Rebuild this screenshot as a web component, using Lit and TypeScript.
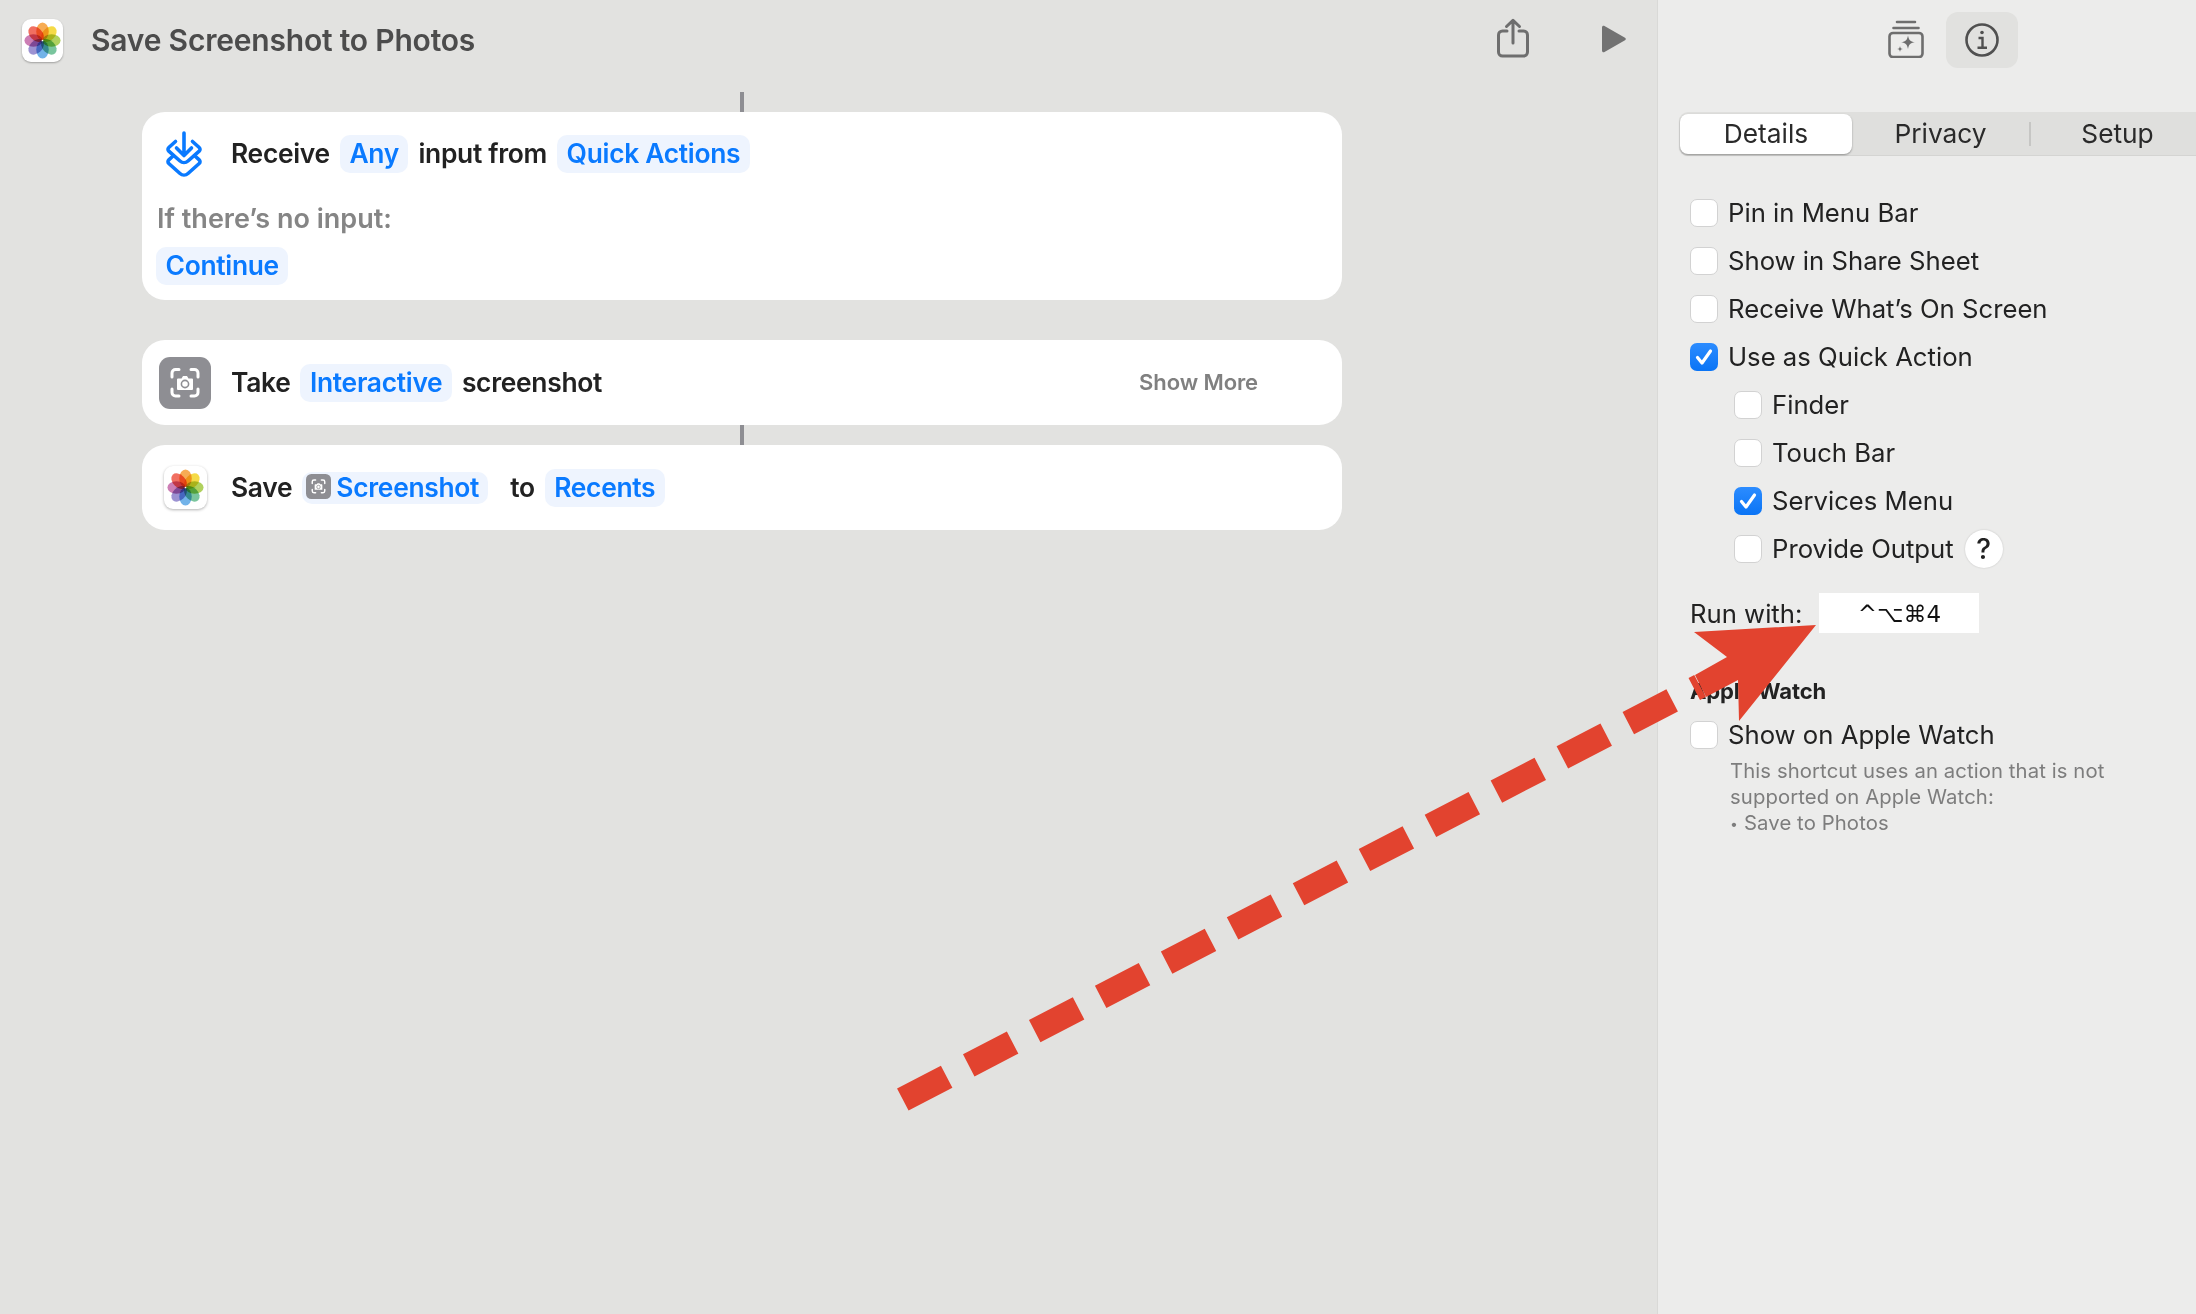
import { LitElement, html, css, svg } from "lit";
import { customElement } from "lit/decorators.js";

const petals = [
  ["#f6a13c", 0], ["#f4d52e", 45], ["#a5cb48", 90], ["#66bd90", 135],
  ["#5ea9e6", 180], ["#8e83cc", 225], ["#c56cab", 270], ["#ef5b4b", 315],
] as const;

const photos = () => html`<svg class="photos" viewBox="7 7 86 86">
  ${petals.map(([c, a]) => svg`<ellipse cx="50" cy="29" rx="14.500" ry="21" fill=${c} fill-opacity="0.88" style="mix-blend-mode:multiply" transform="rotate(${a} 50 50)"/>`)}
  <circle cx="50" cy="50" r="2" fill="#fff"/>
</svg>`;

const shot = () => html`<svg viewBox="0 0 52 52" class="shot">
  <rect width="52" height="52" rx="11" fill="#8e8e93"/>
  <g fill="none" stroke="#fff" stroke-width="3" stroke-linecap="round" stroke-linejoin="round">
    <path d="M13 20v-4a3.500 3.500 0 0 1 3.500-3.500H20M32 12.500h3.500A3.500 3.500 0 0 1 39 16v4M39 32v3.500a3.500 3.500 0 0 1-3.500 3.500H32M20 39h-3.500A3.500 3.500 0 0 1 13 35.500V32"/>
  </g>
  <path d="M19 21.500h3.500l1.500-2.500h4l1.500 2.500H33a1 1 0 0 1 1 1V32a1 1 0 0 1-1 1H19a1 1 0 0 1-1-1v-9.500a1 1 0 0 1 1-1z" fill="#fff"/>
  <circle cx="26" cy="27" r="3.600" fill="none" stroke="#8e8e93" stroke-width="1.600"/>
</svg>`;

interface Row { label: string; checked?: boolean; sub?: boolean; help?: boolean }
const rows: Row[] = [
  { label: "Pin in Menu Bar" },
  { label: "Show in Share Sheet" },
  { label: "Receive What’s On Screen" },
  { label: "Use as Quick Action", checked: true },
  { label: "Finder", sub: true },
  { label: "Touch Bar", sub: true },
  { label: "Services Menu", checked: true, sub: true },
  { label: "Provide Output", sub: true, help: true },
];

const box = (checked?: boolean) => html`<span class="box ${checked ? "on" : ""}">
  ${checked ? html`<svg viewBox="0 0 28 28"><path d="M7.500 14.500l4.500 5.500 8.500-12" fill="none" stroke="#fff" stroke-width="3.200" stroke-linecap="round" stroke-linejoin="round"/></svg>` : ""}
</span>`;

@customElement("app-root")
export class AppRoot extends LitElement {
  static styles = css`
    :host { display: block; position: relative; width: 2196px; height: 1314px; overflow: hidden;
      font-family: Inter, "Liberation Sans", sans-serif; color: #222; }
    .app { display: flex; height: 100%; }
    main { width: 1657px; flex: none; background: #e2e2e0; }
    aside { flex: 1; min-width: 0; background: #ececeb; border-left: 1px solid #d9d9d7; overflow: hidden; }

    .head { height: 80px; display: flex; align-items: center; padding-left: 22px; }
    .appicon { width: 41px; height: 43px; border-radius: 9px; background: #fff; box-shadow: 0 1px 2px rgba(0,0,0,.3);
      display: flex; align-items: center; justify-content: center; flex: none; }
    .appicon .photos { width: 37px; height: 37px; }
    .title { margin-left: 28px; font-size: 30px; font-weight: 600; color: #4c4c4c; letter-spacing: -0.2px; margin-bottom: 1px; }
    .tools { margin-left: auto; display: flex; align-items: center; gap: 71px; padding: 0 31px 2px 0; }
    .share { width: 34px; height: 42px; display: block; }
    .play { width: 25px; height: 28px; display: block; }

    .flow { width: 1200px; margin-left: 142px; display: flex; flex-direction: column; align-items: center; }
    .wire { width: 4px; background: #8e8e93; flex: none; }
    .wire.a { height: 20px; margin-top: 12px; }
    .wire.b { height: 20px; }
    .gap { height: 40px; }
    .card { width: 100%; background: #fff; border-radius: 23px; box-sizing: border-box; }
    .line { display: flex; align-items: center; font-size: 26.400px; font-weight: 600; letter-spacing: -0.3px; gap: 10px; white-space: nowrap; }
    .line > span { padding-bottom: 2px; box-sizing: border-box; }
    .pill { height: 38px; padding: 0 9.500px; border-radius: 10px; background: #eef4fe; color: #0a7aff;
      display: inline-flex; align-items: center; }
    .c1 { height: 188px; padding: 20px 14px 0 15px; }
    .c1 .top { height: 44px; }
    .ic { flex: none; display: flex; }
    .c1 .ic { width: 69px; margin-right: -10px; margin-left: 5px; }
    .receive { width: 38px; height: 46px; display: block; margin-left: 3px; }
    .note { margin-top: 24px; font-size: 27px; font-weight: 600; color: #858585; line-height: 38px; }
    .c1 .line.cont { margin-top: 9px; margin-left: -1px; }

    .c2, .c3 { height: 85px; display: flex; align-items: center; padding-left: 17px; }
    .c2 .ic, .c3 .ic { width: 62px; }
    .shot { width: 52px; height: 52px; display: block; }
    .photoapp { width: 43px; height: 43px; margin-left: 5px; border-radius: 9px; background: #fff; box-shadow: 0 1px 3px rgba(0,0,0,.3);
      display: flex; align-items: center; justify-content: center; }
    .photoapp .photos { width: 37px; height: 37px; }
    .more { margin-left: auto; margin-right: 84px; font-size: 22px; font-weight: 600; color: #808080; letter-spacing: -0.1px; }
    .var { height: 32px; padding: 0 9px 0 4px; gap: 5px; border-radius: 10px; }
    .var .shot { width: 25px; height: 25px; }
    .to { margin: 0 0 0 12px; }

    .stop { height: 80px; display: flex; align-items: flex-start; padding: 12px 0 0 230px; box-sizing: border-box; }
    .stack { width: 36px; height: 38px; margin-top: 8px; display: block; }
    .infobtn { margin-left: 22px; width: 72px; height: 56px; border-radius: 12px; background: #e1e1df; display: flex; align-items: center; justify-content: center; }
    .infobtn svg { width: 36px; height: 36px; display: block; }

    .tabs { margin: 32px 0 0 21px; width: 540px; height: 44px; box-sizing: border-box; background: #dfdfdd; border-radius: 9px;
      display: flex; align-items: center; padding-left: 1px; font-size: 26.300px; color: #2a2a2a; box-shadow: inset 0 -1px 0 #d4d4d2; }
    .tab { height: 40px; display: flex; align-items: center; justify-content: center; flex: none; padding-bottom: 2px; box-sizing: border-box; }
    .tab.sel { width: 172px; background: #fff; border-radius: 8px; box-shadow: 0 1px 2px rgba(0,0,0,.35); }
    .tab.p { width: 177px; }
    .tab.s { width: 174px; }
    .sep { width: 1.500px; height: 24px; background: #c6c6c4; flex: none; }

    .list { margin: 33px 0 0 32px; font-size: 25.700px; }
    .row { height: 48px; display: flex; align-items: center; white-space: nowrap; }
    .row > .txt { padding-bottom: 1px; }
    .row.sub { padding-left: 44px; }
    .box { width: 28px; height: 28px; box-sizing: border-box; border-radius: 7px; background: #fff; border: 1px solid #d2d2d2; margin-right: 10px; flex: none; }
    .box.on { border: none; background: linear-gradient(#2c8cff, #0a74f5); }
    .box svg { display: block; width: 28px; height: 28px; }
    .help { width: 38px; height: 38px; border-radius: 50%; background: #fff; box-shadow: 0 0 2px rgba(0,0,0,.18); margin-left: 11px;
      display: flex; align-items: center; justify-content: center; font-size: 28px; font-weight: 500; }

    .run { margin: 20px 0 0 32px; height: 40px; display: flex; align-items: center; font-size: 25.700px; }
    .keys { margin-left: 17px; width: 160px; height: 40px; background: #fff; display: flex; align-items: center; justify-content: center;
      font-family: "DejaVu Sans", sans-serif; font-size: 23px; color: #111; padding-top: 1px; box-sizing: border-box; }
    .aw { margin: 45px 0 0 32px; font-size: 22px; font-weight: 700; line-height: 26px; letter-spacing: -0.1px; }
    .list.w { margin-top: 7px; }
    .desc { margin: -1px 0 0 72px; font-size: 20.300px; line-height: 26px; color: #7d7d7d; letter-spacing: 0.1px; white-space: nowrap; }
    .bullet { font-size: 14px; margin-right: 6px; vertical-align: 1px; }

    .overlay { position: absolute; left: 0; top: 0; width: 2196px; height: 1314px; pointer-events: none; }
  `;

  render() {
    return html`
      <div class="app">
        <main>
          <div class="head">
            <div class="appicon">${photos()}</div>
            <div class="title">Save Screenshot to Photos</div>
            <div class="tools">
              <svg class="share" viewBox="0 0 34 42" fill="none" stroke="#6e6e6e" stroke-width="3" stroke-linecap="round" stroke-linejoin="round">
                <path d="M11 13H6.500A4 4 0 0 0 2.500 17v17a4 4 0 0 0 4 4h21a4 4 0 0 0 4-4V17a4 4 0 0 0-4-4H23"/>
                <path d="M17 25V2.500M10.500 8.500L17 2.300 23.500 8.500"/>
              </svg>
              <svg class="play" viewBox="0 0 25 28"><path d="M1 2.500C1 1 2.300 .3 3.500 1L24 12.700c1 .6 1 2 0 2.600L3.500 27C2.300 27.700 1 27 1 25.500z" fill="#727272"/></svg>
            </div>
          </div>
          <div class="flow">
            <div class="wire a"></div>
            <div class="card c1">
              <div class="line top">
                <div class="ic">
                  <svg class="receive" viewBox="0 0 38 46" fill="none" stroke="#0a7aff" stroke-width="3.600" stroke-linecap="round" stroke-linejoin="round">
                    <path d="M19 2v22M11.500 17L19 24.500 26.500 17"/>
                    <path d="M10.500 10.500L3.800 16.500a2.500 2.500 0 0 0 0 3.700L15 30a6 6 0 0 0 8 0l11.200-9.800a2.500 2.500 0 0 0 0-3.700L27.500 10.500"/>
                    <path d="M8 25l-4.200 3.800a2.500 2.500 0 0 0 0 3.700L15 42.500a6 6 0 0 0 8 0l11.200-10a2.500 2.500 0 0 0 0-3.700L30 25"/>
                  </svg>
                </div>
                <span>Receive</span><span class="pill">Any</span><span>input from</span><span class="pill">Quick Actions</span>
              </div>
              <div class="note">If there’s no input:</div>
              <div class="line cont"><span class="pill">Continue</span></div>
            </div>
            <div class="gap"></div>
            <div class="card c2 line">
              <div class="ic">${shot()}</div>
              <span>Take</span><span class="pill">Interactive</span><span>screenshot</span>
              <span class="more">Show More</span>
            </div>
            <div class="wire b"></div>
            <div class="card c3 line">
              <div class="ic"><div class="photoapp">${photos()}</div></div>
              <span>Save</span><span class="pill var">${shot()}Screenshot</span><span class="to">to</span><span class="pill">Recents</span>
            </div>
          </div>
        </main>
        <aside>
          <div class="stop">
            <svg class="stack" viewBox="0 0 36 38" fill="none" stroke="#6e6e6e" stroke-width="2.600" stroke-linecap="round">
              <path d="M9 2h18M5.500 8h25"/>
              <rect x="1.500" y="13" width="33" height="24" rx="3.500"/>
              <path d="M20 15.500c.8 4.500 2.200 6 6.800 6.800-4.600.8-6 2.200-6.800 6.800-.8-4.600-2.200-6-6.800-6.800 4.600-.8 6-2.300 6.800-6.800z" fill="#6e6e6e" stroke="none"/>
              <path d="M12 26c.3 2 1 2.700 3 3-2 .3-2.700 1-3 3-.3-2-1-2.700-3-3 2-.3 2.700-1 3-3z" fill="#6e6e6e" stroke="none"/>
            </svg>
            <div class="infobtn">
              <svg viewBox="0 0 36 36" fill="none" stroke="#505050" stroke-width="2.600">
                <circle cx="18" cy="18" r="15.500"/>
                <circle cx="18" cy="10.500" r="1.800" fill="#505050" stroke="none"/>
                <path d="M14.500 16H18.500V25.500M13.500 25.800H23" stroke-width="2.400"/>
              </svg>
            </div>
          </div>
          <div class="tabs">
            <div class="tab sel">Details</div>
            <div class="tab p">Privacy</div>
            <div class="sep"></div>
            <div class="tab s">Setup</div>
          </div>
          <div class="list">
            ${rows.map((r) => html`<div class="row ${r.sub ? "sub" : ""}">${box(r.checked)}<span class="txt">${r.label}</span>${r.help ? html`<span class="help">?</span>` : ""}</div>`)}
          </div>
          <div class="run"><span class="txt">Run with:</span><span class="keys">^⌥⌘4</span></div>
          <div class="aw">Apple Watch</div>
          <div class="list w"><div class="row">${box(false)}<span class="txt">Show on Apple Watch</span></div></div>
          <div class="desc">This shortcut uses an action that is not<br />supported on Apple Watch:<br /><span class="bullet">•</span>Save to Photos</div>
        </aside>
      </div>
      <svg class="overlay" viewBox="0 0 2196 1314">
        <line x1="902.800" y1="1099.500" x2="1700" y2="686" stroke="#e2432f" stroke-width="25" stroke-dasharray="49.400 24.900"/>
        <polygon points="1816,625 1694,632 1727,657 1695,675 1706,697 1738,680 1739,721" fill="#e2432f"/>
      </svg>
    `;
  }
}
